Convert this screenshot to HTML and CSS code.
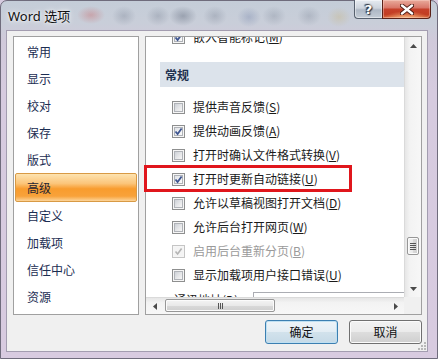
FILE: index.html
```html
<!DOCTYPE html>
<html>
<head>
<meta charset="utf-8">
<title>Word 选项</title>
<link rel="stylesheet" href="styles.css">
</head>
<body>
<div class="window">
  <div class="titlebar">
    <span class="title">Word 选项</span>
    <div class="caption-btns">
      <div class="cap help">?</div>
      <div class="cap close">
        <svg width="14" height="11" viewBox="0 0 14 11"><path d="M2 1.5 L12 9.5 M12 1.5 L2 9.5" stroke="#4a1a12" stroke-width="4.2" stroke-linecap="round"/><path d="M2 1.5 L12 9.5 M12 1.5 L2 9.5" stroke="#ffffff" stroke-width="2.4" stroke-linecap="round"/></svg>
      </div>
    </div>
  </div>
  <div class="client">
    <div class="main">
      <ul class="nav">
        <li>常用</li>
        <li>显示</li>
        <li>校对</li>
        <li>保存</li>
        <li>版式</li>
        <li class="sel">高级</li>
        <li>自定义</li>
        <li>加载项</li>
        <li>信任中心</li>
        <li>资源</li>
      </ul>
      <div class="pane">
        <div class="viewport">
          <div class="row first"><span class="cb checked"><svg width="13" height="13" viewBox="0 0 13 13"><path d="M3.5 6.5 L5.6 9 L9.6 3.5" fill="none" stroke="#3e5590" stroke-width="1.8"/></svg></span><span class="lbl">嵌入智能标记(<u>M</u>)</span></div>
          <div class="section">常规</div>
          <div class="rows">
            <div class="row"><span class="cb"></span><span class="lbl">提供声音反馈(<u>S</u>)</span></div>
            <div class="row"><span class="cb checked"><svg width="13" height="13" viewBox="0 0 13 13"><path d="M3.5 6.5 L5.6 9 L9.6 3.5" fill="none" stroke="#3e5590" stroke-width="1.8"/></svg></span><span class="lbl">提供动画反馈(<u>A</u>)</span></div>
            <div class="row"><span class="cb"></span><span class="lbl">打开时确认文件格式转换(<u>V</u>)</span></div>
            <div class="row"><span class="cb checked"><svg width="13" height="13" viewBox="0 0 13 13"><path d="M3.5 6.5 L5.6 9 L9.6 3.5" fill="none" stroke="#3e5590" stroke-width="1.8"/></svg></span><span class="lbl">打开时更新自动链接(<u>U</u>)</span></div>
            <div class="row"><span class="cb"></span><span class="lbl">允许以草稿视图打开文档(<u>D</u>)</span></div>
            <div class="row"><span class="cb"></span><span class="lbl">允许后台打开网页(<u>W</u>)</span></div>
            <div class="row disabled"><span class="cb checked"><svg width="13" height="13" viewBox="0 0 13 13"><path d="M3.5 6.5 L5.6 9 L9.6 3.5" fill="none" stroke="#b4b4b4" stroke-width="1.6"/></svg></span><span class="lbl">启用后台重新分页(<u>B</u>)</span></div>
            <div class="row"><span class="cb"></span><span class="lbl">显示加载项用户接口错误(<u>U</u>)</span></div>
            <div class="row addr"><span class="lbl addr-lbl">通讯地址(<u>D</u>):</span><span class="tbox"></span></div>
          </div>
        </div>
        <div class="vscroll">
          <div class="sbtn"><svg width="7" height="4" viewBox="0 0 7 4"><path d="M0 4 L3.5 0 L7 4Z" fill="#4a4a4a"/></svg></div>
          <div class="vtrack"><div class="vthumb"><i></i><i></i><i></i><i></i></div></div>
          <div class="sbtn"><svg width="7" height="4" viewBox="0 0 7 4"><path d="M0 0 L3.5 4 L7 0Z" fill="#4a4a4a"/></svg></div>
        </div>
        <div class="hscroll">
          <div class="sbtn"><svg width="4" height="7" viewBox="0 0 4 7"><path d="M4 0 L0 3.5 L4 7Z" fill="#4a4a4a"/></svg></div>
          <div class="htrack"><div class="hthumb"><i></i><i></i><i></i></div></div>
          <div class="sbtn"><svg width="4" height="7" viewBox="0 0 4 7"><path d="M0 0 L4 3.5 L0 7Z" fill="#4a4a4a"/></svg></div>
        </div>
        <div class="corner"></div>
      </div>
    </div>
    <div class="buttons">
      <div class="btn default">确定</div>
      <div class="btn">取消</div>
    </div>
    <svg class="grip" width="8" height="8" viewBox="0 0 8 8"><g fill="#b8b8b8"><rect x="6" y="0" width="2" height="2"/><rect x="3" y="3" width="2" height="2"/><rect x="6" y="3" width="2" height="2"/><rect x="0" y="6" width="2" height="2"/><rect x="3" y="6" width="2" height="2"/><rect x="6" y="6" width="2" height="2"/></g></svg>
  </div>
  <div class="mark"></div>
</div>
</body>
</html>
```
FILE: styles.css
```css
html, body {
  margin: 0;
  padding: 0;
  background: #d6cbdf;
}
body {
  width: 438px;
  height: 359px;
  overflow: hidden;
  font-family: "Noto Sans CJK SC", "Microsoft YaHei", sans-serif;
  font-size: 12px;
}
.window {
  position: relative;
  box-sizing: border-box;
  width: 438px;
  height: 359px;
  border: 1px solid #6f6c7c;
  border-radius: 7px 7px 0 0;
  background:
    radial-gradient(ellipse 14px 9px at 90px 14px, rgba(200,90,90,0.35), transparent),
    radial-gradient(ellipse 12px 10px at 123px 15px, rgba(90,100,120,0.25), transparent),
    radial-gradient(ellipse 12px 10px at 157px 15px, rgba(90,100,120,0.25), transparent),
    radial-gradient(ellipse 14px 10px at 182px 15px, rgba(70,80,100,0.35), transparent),
    radial-gradient(ellipse 12px 10px at 214px 15px, rgba(90,100,120,0.25), transparent),
    radial-gradient(ellipse 12px 10px at 248px 16px, rgba(80,100,150,0.25), transparent),
    radial-gradient(ellipse 12px 10px at 273px 15px, rgba(90,100,120,0.22), transparent),
    radial-gradient(ellipse 12px 10px at 308px 15px, rgba(90,100,120,0.22), transparent),
    radial-gradient(ellipse 12px 10px at 338px 16px, rgba(200,170,90,0.25), transparent),
    linear-gradient(180deg, #c4cdd8 0px, #c9ced9 22px, #d0c9da 40px, #d6cbdf 90px, #d8cbe0 100%);
}
.titlebar {
  display: flex;
  align-items: center;
  justify-content: space-between;
  height: 29px;
  padding-left: 7px;
  padding-right: 6px;
}
.title {
  font-family: "Noto Sans", "Noto Sans CJK SC", sans-serif;
  font-size: 13px;
  color: #111;
  text-shadow: 0 0 6px rgba(255,255,255,0.95), 0 0 3px rgba(255,255,255,0.9);
  line-height: 16px;
  margin-top: 1px;
}
.caption-btns {
  display: flex;
  align-self: flex-start;
  margin-top: -1px;
}
.cap {
  box-sizing: border-box;
  height: 19px;
  display: flex;
  align-items: center;
  justify-content: center;
}
.help {
  width: 28px;
  border: 1px solid #56606e;
  border-top: none;
  border-right: none;
  border-radius: 0 0 0 4px;
  background: linear-gradient(180deg, #e6ebf1 0%, #cdd4dd 45%, #aeb8c5 55%, #c4ccd6 100%);
  box-shadow: inset 0 0 0 1px rgba(255,255,255,0.45);
  color: #fff;
  font-family: "DejaVu Sans", sans-serif;
  font-weight: bold;
  font-size: 13px;
  line-height: 15px;
  text-shadow: 0 0 2px #2d3440, 1px 1px 1px #2d3440, -1px -1px 1px #2d3440;
}
.close {
  width: 49px;
  border: 1px solid #5a2218;
  border-top: none;
  border-radius: 0 0 4px 0;
  background:
    radial-gradient(ellipse 22px 7px at 50% 100%, rgba(255,200,140,0.8), transparent),
    linear-gradient(180deg, #e9ab9c 0%, #d9786a 42%, #c5402a 52%, #c23d23 80%, #d86a3e 100%);
  box-shadow: inset 0 0 0 1px rgba(255,220,210,0.4);
}
.client {
  position: relative;
  box-sizing: border-box;
  height: 322px;
  margin: 0 9px 0 5px;
  border: 1px solid #a39db0;
  background: #f0f0f0;
  padding: 5px 5px 0 6px;
}
.main {
  display: flex;
  gap: 6px;
  height: 279px;
}
.nav {
  box-sizing: border-box;
  width: 126px;
  height: 279px;
  margin: 0;
  padding: 1px;
  list-style: none;
  background: #fff;
  border: 1px solid #a0a0a0;
  color: #1b2d52;
}
.nav li {
  height: 27px;
  line-height: 27px;
  padding-left: 12px;
}
.nav li.sel {
  box-sizing: border-box;
  height: 29px;
  line-height: 27px;
  padding-left: 11px;
  border: 1px solid #d89a45;
  border-radius: 2px;
  background: linear-gradient(180deg, #fde3b0 0%, #fbc57a 35%, #f89c2e 55%, #f8a23a 82%, #fcd59a 100%);
  color: #1f2533;
}
.pane {
  flex: 1;
  box-sizing: border-box;
  height: 279px;
  border: 1px solid #a0a0a0;
  background: #fff;
  display: grid;
  grid-template-columns: 1fr 17px;
  grid-template-rows: 1fr 17px;
  overflow: hidden;
}
.viewport {
  overflow: hidden;
  color: #1a1a1a;
}
.row {
  display: flex;
  align-items: center;
  height: 24px;
  padding-left: 26px;
  gap: 8px;
  white-space: nowrap;
}
.row.first {
  margin-top: -12px;
}
.lbl {
  flex: none;
  line-height: 16px;
}
.lbl u {
  text-decoration: underline;
  text-underline-offset: 1px;
}
.section {
  margin: 13px 0 0 14px;
  height: 25px;
  line-height: 25px;
  padding-left: 5px;
  background: #dce3eb;
  color: #1f3250;
  font-weight: bold;
}
.rows {
  margin-top: 8px;
}
.cb {
  position: relative;
  flex: none;
  box-sizing: border-box;
  width: 13px;
  height: 13px;
  border: 1px solid #8e8f8f;
  background: #f6f6f6;
  padding: 1px;
}
.cb::before {
  content: "";
  display: block;
  box-sizing: border-box;
  width: 9px;
  height: 9px;
  border: 1px solid #b0b3b8;
  background: linear-gradient(135deg, #cdd1d7 0%, #e6e7e9 55%, #f6f6f6 100%);
}
.cb svg {
  position: absolute;
  left: -1px;
  top: -1px;
}
.cb.checked::before {
  background: linear-gradient(135deg, #dfe2e6 0%, #f1f2f3 60%, #fafafa 100%);
}
.disabled .cb {
  border-color: #c5c5c5;
}
.disabled .cb::before {
  border-color: #f4f4f4;
  background: #f4f4f4;
}
.disabled .lbl {
  color: #9a9a9a;
}
.row.addr {
  padding-left: 28px;
  gap: 0;
  align-items: flex-start;
  height: 24px;
}
.addr-lbl {
  width: 79px;
  margin-top: 5px;
}
.tbox {
  display: block;
  flex: none;
  box-sizing: border-box;
  width: 200px;
  height: 22px;
  margin-top: 5px;
  border: 1px solid #abadb3;
  border-right-color: #dbdfe6;
  border-bottom-color: #e3e9ef;
  background: #fff;
}
.vscroll {
  display: flex;
  flex-direction: column;
  background: linear-gradient(90deg, #e6e6e6 0%, #f3f3f3 30%, #f7f7f7 100%);
  border-left: 1px solid #dadada;
}
.sbtn {
  flex: none;
  width: 17px;
  height: 17px;
  display: flex;
  align-items: center;
  justify-content: center;
}
.vscroll .sbtn {
  width: 16px;
}
.vtrack {
  flex: 1;
}
.vthumb {
  box-sizing: border-box;
  width: 12px;
  height: 18px;
  margin: 183px 0 0 2px;
  border: 1px solid #979797;
  border-radius: 2px;
  background: linear-gradient(90deg, #f4f4f4 0%, #e9e9e9 50%, #d9d9d9 51%, #cfcfcf 100%);
  box-shadow: inset 0 0 0 1px #fbfbfb;
  display: flex;
  flex-direction: column;
  align-items: center;
  justify-content: center;
  gap: 1px;
}
.vthumb i {
  display: block;
  width: 6px;
  height: 1px;
  background: #555;
}
.hscroll {
  display: flex;
  background: linear-gradient(180deg, #e6e6e6 0%, #f3f3f3 30%, #f7f7f7 100%);
  border-top: 1px solid #dadada;
}
.hscroll .sbtn {
  height: 16px;
}
.htrack {
  flex: 1;
}
.hthumb {
  box-sizing: border-box;
  width: 110px;
  height: 13px;
  margin: 1px 0 0 2px;
  border: 1px solid #979797;
  border-radius: 2px;
  background: linear-gradient(180deg, #f4f4f4 0%, #e9e9e9 50%, #d9d9d9 51%, #cfcfcf 100%);
  box-shadow: inset 0 0 0 1px #fbfbfb;
  display: flex;
  align-items: center;
  justify-content: center;
  gap: 1px;
}
.hthumb i {
  display: block;
  width: 1px;
  height: 6px;
  background: #555;
}
.corner {
  background: #f0f0f0;
}
.buttons {
  display: flex;
  justify-content: flex-end;
  gap: 11px;
  margin-top: 5px;
}
.btn {
  box-sizing: border-box;
  width: 73px;
  height: 24px;
  line-height: 22px;
  text-align: center;
  color: #111;
  border: 1px solid #707070;
  border-radius: 3px;
  background: linear-gradient(180deg, #f2f2f2 0%, #ebebeb 50%, #dddddd 51%, #cfcfcf 100%);
  box-shadow: inset 0 0 0 1px #fbfbfb;
}
.btn.default {
  border-color: #3c7fb1;
  background: linear-gradient(180deg, #eef4f8 0%, #e3edf4 50%, #d2e2ec 51%, #c6dae7 100%);
  box-shadow: inset 0 0 0 1px #bfe0f2;
}
.grip {
  position: absolute;
  right: 1px;
  bottom: 1px;
}
.mark {
  position: absolute;
  left: 143px;
  top: 164px;
  width: 208px;
  height: 27px;
  box-sizing: border-box;
  border: 3px solid #e0161c;
}
```
